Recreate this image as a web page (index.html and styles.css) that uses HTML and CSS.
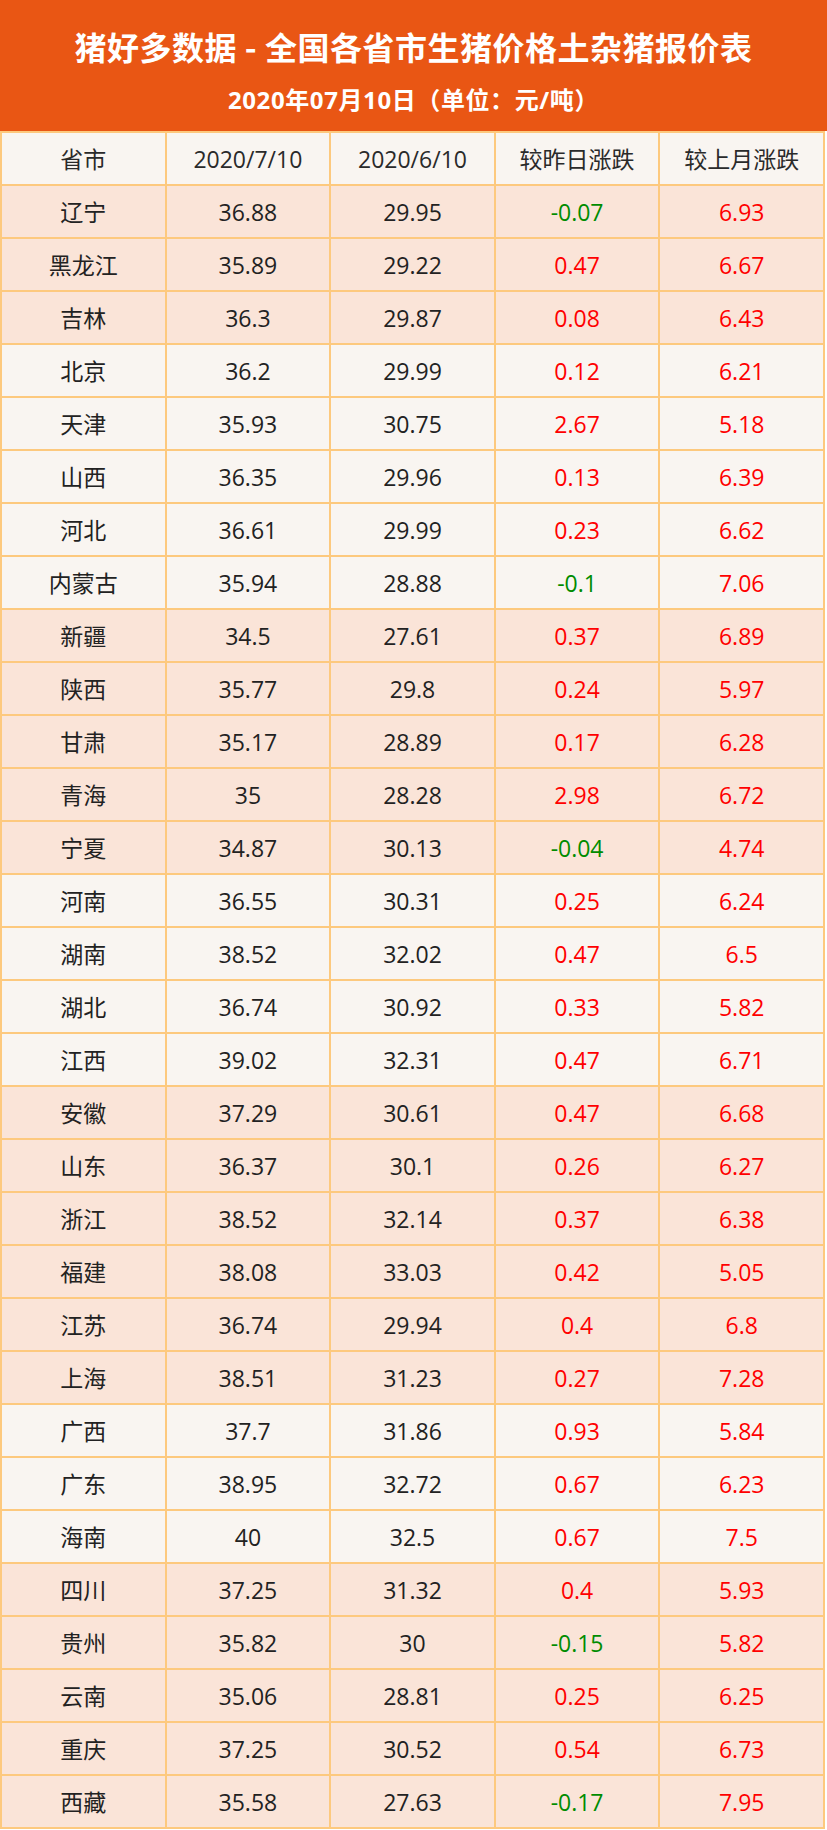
FILE: index.html
```html
<!DOCTYPE html>
<html lang="zh-CN">
<head>
<meta charset="utf-8">
<title>猪好多数据 - 全国各省市生猪价格土杂猪报价表</title>
<link rel="stylesheet" href="styles.css">
</head>
<body>
<div class="page">
  <header class="banner">
    <h1 class="title">猪好多数据 - 全国各省市生猪价格土杂猪报价表</h1>
    <p class="subtitle">2020年07月10日（单位：元/吨）</p>
  </header>
  <table class="prices">
    <thead>
      <tr class="light"><th>省市</th><th>2020/7/10</th><th>2020/6/10</th><th>较昨日涨跌</th><th>较上月涨跌</th></tr>
    </thead>
    <tbody>
      <tr class="peach"><td>辽宁</td><td>36.88</td><td>29.95</td><td class="down">-0.07</td><td class="up">6.93</td></tr>
      <tr class="peach"><td>黑龙江</td><td>35.89</td><td>29.22</td><td class="up">0.47</td><td class="up">6.67</td></tr>
      <tr class="peach"><td>吉林</td><td>36.3</td><td>29.87</td><td class="up">0.08</td><td class="up">6.43</td></tr>
      <tr class="light"><td>北京</td><td>36.2</td><td>29.99</td><td class="up">0.12</td><td class="up">6.21</td></tr>
      <tr class="light"><td>天津</td><td>35.93</td><td>30.75</td><td class="up">2.67</td><td class="up">5.18</td></tr>
      <tr class="light"><td>山西</td><td>36.35</td><td>29.96</td><td class="up">0.13</td><td class="up">6.39</td></tr>
      <tr class="light"><td>河北</td><td>36.61</td><td>29.99</td><td class="up">0.23</td><td class="up">6.62</td></tr>
      <tr class="light"><td>内蒙古</td><td>35.94</td><td>28.88</td><td class="down">-0.1</td><td class="up">7.06</td></tr>
      <tr class="peach"><td>新疆</td><td>34.5</td><td>27.61</td><td class="up">0.37</td><td class="up">6.89</td></tr>
      <tr class="peach"><td>陕西</td><td>35.77</td><td>29.8</td><td class="up">0.24</td><td class="up">5.97</td></tr>
      <tr class="peach"><td>甘肃</td><td>35.17</td><td>28.89</td><td class="up">0.17</td><td class="up">6.28</td></tr>
      <tr class="peach"><td>青海</td><td>35</td><td>28.28</td><td class="up">2.98</td><td class="up">6.72</td></tr>
      <tr class="peach"><td>宁夏</td><td>34.87</td><td>30.13</td><td class="down">-0.04</td><td class="up">4.74</td></tr>
      <tr class="light"><td>河南</td><td>36.55</td><td>30.31</td><td class="up">0.25</td><td class="up">6.24</td></tr>
      <tr class="light"><td>湖南</td><td>38.52</td><td>32.02</td><td class="up">0.47</td><td class="up">6.5</td></tr>
      <tr class="light"><td>湖北</td><td>36.74</td><td>30.92</td><td class="up">0.33</td><td class="up">5.82</td></tr>
      <tr class="light"><td>江西</td><td>39.02</td><td>32.31</td><td class="up">0.47</td><td class="up">6.71</td></tr>
      <tr class="peach"><td>安徽</td><td>37.29</td><td>30.61</td><td class="up">0.47</td><td class="up">6.68</td></tr>
      <tr class="peach"><td>山东</td><td>36.37</td><td>30.1</td><td class="up">0.26</td><td class="up">6.27</td></tr>
      <tr class="peach"><td>浙江</td><td>38.52</td><td>32.14</td><td class="up">0.37</td><td class="up">6.38</td></tr>
      <tr class="peach"><td>福建</td><td>38.08</td><td>33.03</td><td class="up">0.42</td><td class="up">5.05</td></tr>
      <tr class="peach"><td>江苏</td><td>36.74</td><td>29.94</td><td class="up">0.4</td><td class="up">6.8</td></tr>
      <tr class="peach"><td>上海</td><td>38.51</td><td>31.23</td><td class="up">0.27</td><td class="up">7.28</td></tr>
      <tr class="light"><td>广西</td><td>37.7</td><td>31.86</td><td class="up">0.93</td><td class="up">5.84</td></tr>
      <tr class="light"><td>广东</td><td>38.95</td><td>32.72</td><td class="up">0.67</td><td class="up">6.23</td></tr>
      <tr class="light"><td>海南</td><td>40</td><td>32.5</td><td class="up">0.67</td><td class="up">7.5</td></tr>
      <tr class="peach"><td>四川</td><td>37.25</td><td>31.32</td><td class="up">0.4</td><td class="up">5.93</td></tr>
      <tr class="peach"><td>贵州</td><td>35.82</td><td>30</td><td class="down">-0.15</td><td class="up">5.82</td></tr>
      <tr class="peach"><td>云南</td><td>35.06</td><td>28.81</td><td class="up">0.25</td><td class="up">6.25</td></tr>
      <tr class="peach"><td>重庆</td><td>37.25</td><td>30.52</td><td class="up">0.54</td><td class="up">6.73</td></tr>
      <tr class="peach"><td>西藏</td><td>35.58</td><td>27.63</td><td class="down">-0.17</td><td class="up">7.95</td></tr>
    </tbody>
  </table>
</div>
</body>
</html>
```

FILE: styles.css
```css
html, body {
  margin: 0;
  padding: 0;
  background: #ffffff;
}

.page {
  width: 827px;
  font-family: "Open Sans", "Noto Sans CJK SC", sans-serif;
}

.banner {
  background: #e95614;
  color: #ffffff;
  height: 131px;
  box-sizing: border-box;
  padding-top: 26px;
  display: flex;
  flex-direction: column;
  align-items: center;
}

.title {
  margin: 0;
  font-family: "Noto Sans CJK SC", sans-serif;
  font-size: 32px;
  line-height: 40px;
  font-weight: 700;
  letter-spacing: 0.5px;
}

.subtitle {
  margin: 19px 0 0;
  font-family: "Open Sans", "Noto Sans CJK SC", sans-serif;
  font-size: 24px;
  line-height: 30px;
  font-weight: 700;
  letter-spacing: 0.6px;
}

.prices {
  width: 825px;
  border-collapse: collapse;
  table-layout: fixed;
  font-size: 23px;
  color: #222222;
}

.prices th,
.prices td {
  border: 2px solid #fdc97e;
  height: 51px;
  padding: 0;
  text-align: center;
  vertical-align: middle;
  font-weight: 400;
  line-height: 30px;
}

.prices th {
  color: #2a2a2a;
}

.light {
  background: #f9f5f1;
}

.peach {
  background: #fae4d8;
}

.prices td.up {
  color: #ff0000;
}

.prices td.down {
  color: #008c00;
}
```
